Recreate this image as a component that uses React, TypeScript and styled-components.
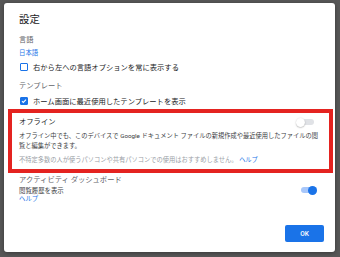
import React from "react";
import styled, { createGlobalStyle } from "styled-components";

const GlobalStyle = createGlobalStyle`
  html, body {
    margin: 0;
    padding: 0;
    background: #575757;
  }
  body {
    font-family: Roboto, "Noto Sans CJK JP", sans-serif;
  }
`;

const StyledBackdrop = styled.div`
  width: 340px;
  height: 257px;
  padding: 3px 5px 5px 4px;
  box-sizing: border-box;
  background: #575757;
`;

const StyledDialog = styled.div`
  height: 100%;
  box-sizing: border-box;
  background: #fff;
  border-radius: 3px;
  box-shadow: 0 1px 4px rgba(0, 0, 0, 0.35);
  padding: 11px 11px 10px 15px;
  display: flex;
  flex-direction: column;
`;

const StyledTitle = styled.div`
  font-size: 10.4px;
  line-height: 12px;
  color: #202124;
`;

const StyledHeading = styled.div<{ $gap: number }>`
  margin-top: ${(p) => p.$gap}px;
  font-size: 7.3px;
  line-height: 10px;
  color: #5f6368;
`;

const StyledLink = styled.a`
  color: #1a73e8;
  text-decoration: none;
`;

const StyledLinkLine = styled.div<{ $gap: number; $height: number }>`
  margin-top: ${(p) => p.$gap}px;
  font-size: 6.4px;
  line-height: ${(p) => p.$height}px;
`;

const StyledCheckRow = styled.label<{ $gap: number }>`
  margin-top: ${(p) => p.$gap}px;
  height: 10px;
  display: flex;
  align-items: center;
  gap: 5px;
  padding-left: 1px;
  font-size: 7.3px;
  color: #202124;
`;

const StyledBox = styled.span<{ $checked?: boolean }>`
  width: 8px;
  height: 8px;
  box-sizing: border-box;
  border-radius: 1px;
  border: 1.5px solid #1a73e8;
  background: ${(p) => (p.$checked ? "#1a73e8" : "#fff")};
  display: flex;
  align-items: center;
  justify-content: center;
`;

const StyledSection = styled.div<{ $gap: number }>`
  position: relative;
  margin-top: ${(p) => p.$gap}px;
`;

const StyledHighlight = styled.div`
  position: absolute;
  top: -8px;
  bottom: -8px;
  left: -11px;
  right: -9px;
  border: 4px solid #e42320;
  pointer-events: none;
`;

const StyledToggleRow = styled.div<{ $height: number }>`
  height: ${(p) => p.$height}px;
  display: flex;
  align-items: center;
  justify-content: space-between;
`;

const StyledSectionTitle = styled.div`
  font-size: 7.3px;
  line-height: 10px;
  color: #202124;
`;

const StyledSwitch = styled.span<{ $on?: boolean; $right: number }>`
  position: relative;
  width: 18px;
  height: 9px;
  margin-right: ${(p) => p.$right}px;
  display: flex;
  align-items: center;

  &::before {
    content: "";
    display: block;
    margin-left: 2px;
    width: 16px;
    height: 6px;
    border-radius: 3px;
    background: ${(p) => (p.$on ? "#a8c7fa" : "#e0e2e6")};
  }

  &::after {
    content: "";
    position: absolute;
    top: 0;
    left: ${(p) => (p.$on ? "9px" : "0")};
    width: 9px;
    height: 9px;
    border-radius: 50%;
    background: ${(p) => (p.$on ? "#1a73e8" : "#fff")};
    box-shadow: ${(p) =>
      p.$on ? "none" : "0 0.5px 1.5px rgba(0, 0, 0, 0.35)"};
  }
`;

const StyledDesc = styled.div<{ $gap: number; $muted?: boolean }>`
  margin-top: ${(p) => p.$gap}px;
  font-size: 6.25px;
  line-height: 10px;
  color: ${(p) => (p.$muted ? "#9aa0a6" : "#3c4043")};
  padding-right: 5px;
`;

const StyledRowText = styled.div`
  font-size: 6.4px;
  color: #3c4043;
`;

const StyledFooter = styled.div`
  margin-top: auto;
  display: flex;
  justify-content: flex-end;
`;

const StyledButton = styled.button`
  width: 39px;
  height: 17px;
  border: none;
  border-radius: 2px;
  background: #1a73e8;
  color: #fff;
  font-family: Roboto, sans-serif;
  font-weight: 500;
  font-size: 6.5px;
  padding: 0;
  cursor: pointer;
`;

const Check = () => (
  <svg width="6" height="6" viewBox="0 0 12 12">
    <path
      d="M2 6.3l2.6 2.6L10 3.4"
      fill="none"
      stroke="#fff"
      strokeWidth="2.2"
    />
  </svg>
);

export default function App() {
  return (
    <>
      <GlobalStyle />
      <StyledBackdrop>
        <StyledDialog>
          <StyledTitle>設定</StyledTitle>

          <StyledHeading $gap={9}>言語</StyledHeading>
          <StyledLinkLine $gap={3} $height={10}>
            <StyledLink href="#">日本語</StyledLink>
          </StyledLinkLine>
          <StyledCheckRow $gap={4}>
            <StyledBox />
            右から左への言語オプションを常に表示する
          </StyledCheckRow>

          <StyledHeading $gap={9}>テンプレート</StyledHeading>
          <StyledCheckRow $gap={5}>
            <StyledBox $checked>
              <Check />
            </StyledBox>
            ホーム画面に最近使用したテンプレートを表示
          </StyledCheckRow>

          <StyledSection $gap={11}>
            <StyledToggleRow $height={10}>
              <StyledSectionTitle>オフライン</StyledSectionTitle>
              <StyledSwitch $right={10} />
            </StyledToggleRow>
            <StyledDesc $gap={4}>
              オフライン中でも、このデバイスで Google ドキュメント
              ファイルの新規作成や最近使用したファイルの閲覧と編集ができます。
            </StyledDesc>
            <StyledDesc $gap={4} $muted>
              不特定多数の人が使うパソコンや共有パソコンでの使用はおすすめしません。{" "}
              <StyledLink href="#">ヘルプ</StyledLink>
            </StyledDesc>
            <StyledHighlight />
          </StyledSection>

          <StyledHeading $gap={10}>アクティビティ ダッシュボード</StyledHeading>
          <StyledToggleRow $height={10}>
            <StyledRowText>閲覧履歴を表示</StyledRowText>
            <StyledSwitch $on $right={7} />
          </StyledToggleRow>
          <StyledLinkLine $gap={0} $height={9}>
            <StyledLink href="#">ヘルプ</StyledLink>
          </StyledLinkLine>

          <StyledFooter>
            <StyledButton>OK</StyledButton>
          </StyledFooter>
        </StyledDialog>
      </StyledBackdrop>
    </>
  );
}
